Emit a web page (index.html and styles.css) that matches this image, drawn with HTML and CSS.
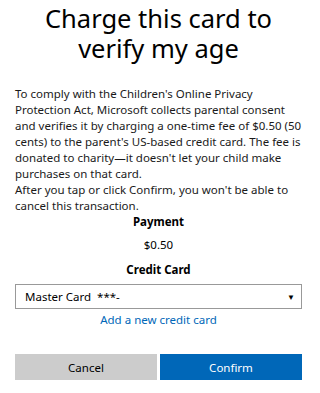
FILE: index.html
```html
<!DOCTYPE html>
<html>
<head>
<meta charset="utf-8">
<link rel="stylesheet" href="styles.css">
</head>
<body>
<div class="page">
  <h1 class="title">Charge this card to verify my age</h1>
  <p class="body-text">To comply with the Children's Online Privacy Protection Act, Microsoft collects parental consent and verifies it by charging a one-time fee of $0.50 (50 cents) to the parent's US-based credit card. The fee is donated to charity—it doesn't let your child make purchases on that card.<br>After you tap or click Confirm, you won't be able to cancel this transaction.</p>
  <div class="label">Payment</div>
  <div class="amount">$0.50</div>
  <div class="label label-card">Credit Card</div>
  <div class="select">
    <span class="select-text">Master Card&nbsp;&nbsp;***-</span>
    <span class="arrow">&#9660;</span>
  </div>
  <div class="link-row"><a class="link" href="#">Add a new credit card</a></div>
  <div class="buttons">
    <button class="btn btn-cancel">Cancel</button>
    <button class="btn btn-confirm">Confirm</button>
  </div>
</div>
</body>
</html>
```

FILE: styles.css
```css
html, body {
  margin: 0;
  padding: 0;
  background: #fff;
}
body {
  font-family: "Noto Sans", "Open Sans", sans-serif;
  color: #000;
}
.page {
  width: 320px;
  padding: 3px 18px 0 15px;
  box-sizing: border-box;
}
.title {
  margin: 0;
  font-weight: 400;
  font-size: 25.5px;
  line-height: 30px;
  text-align: center;
  padding: 0 20px;
}
.body-text {
  margin: 23px 0 0 0;
  font-size: 11.5px;
  line-height: 16px;
  color: #1a1a1a;
}
.label {
  margin-top: 0;
  font-size: 11.5px;
  font-weight: 700;
  line-height: 16px;
  text-align: center;
}
.amount {
  margin-top: 7px;
  font-size: 11.5px;
  line-height: 16px;
  text-align: center;
}
.label-card {
  margin-top: 9px;
}
.select {
  margin-top: 6px;
  height: 25px;
  box-sizing: border-box;
  border: 1px solid #999;
  display: flex;
  align-items: center;
  justify-content: space-between;
  padding: 0 6px 0 9px;
  font-size: 11.5px;
}
.arrow {
  font-size: 8px;
}
.link-row {
  text-align: center;
  margin-top: 1px;
  line-height: 16px;
}
.link {
  font-size: 11.5px;
  color: #0067b8;
  text-decoration: none;
}
.buttons {
  margin-top: 26px;
  display: grid;
  grid-template-columns: 1fr 1fr;
  gap: 3px;
}
.btn {
  height: 26px;
  border: none;
  margin: 0;
  font-family: inherit;
  font-size: 11.5px;
  padding: 0;
}
.btn-cancel {
  background: #cccccc;
  color: #000;
}
.btn-confirm {
  background: #0067b8;
  color: #fff;
}
```
